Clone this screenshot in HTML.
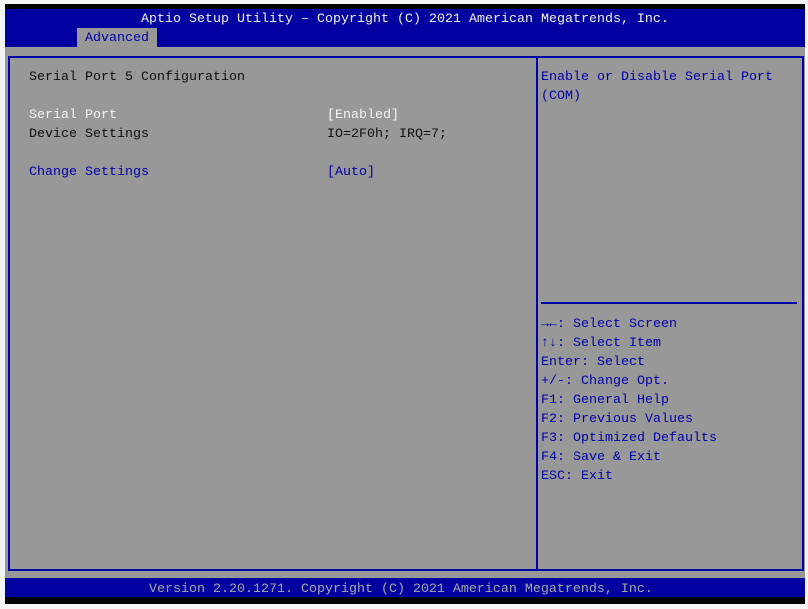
<!DOCTYPE html>
<html><head><style>
body{margin:0;width:808px;height:609px;background:#f3f4f6;position:relative;overflow:hidden;font-family:"Liberation Mono",monospace;font-size:13.33px;}
.a{position:absolute;}
.t{position:absolute;line-height:19px;white-space:pre;}
.w{color:#f4f4f4}.k{color:#101010}.b{color:#0000a8}
</style></head><body>
<div class="a" style="left:5px;top:4px;width:800px;height:5px;background:#000"></div>
<div class="a" style="left:5px;top:9px;width:800px;height:38px;background:#0000a0"></div>
<div class="a" style="left:77px;top:28px;width:80px;height:19px;background:#989898"></div>
<div class="a" style="left:5px;top:47px;width:800px;height:531px;background:#989898"></div>
<div class="a" style="left:8px;top:56px;width:792px;height:511px;border:2px solid #0000a8"></div>
<div class="a" style="left:536px;top:56px;width:2px;height:513px;background:#0000a8"></div>
<div class="a" style="left:541px;top:302px;width:256px;height:2px;background:#0000a8"></div>
<div class="a" style="left:5px;top:578px;width:800px;height:19px;background:#0000a0"></div>
<div class="a" style="left:5px;top:597px;width:800px;height:7px;background:#000"></div>

<div class="t w" style="left:5px;width:800px;text-align:center;top:10px">Aptio Setup Utility – Copyright (C) 2021 American Megatrends, Inc.</div>
<div class="t b" style="left:85px;top:29px">Advanced</div>

<div class="t k" style="left:29px;top:68px">Serial Port 5 Configuration</div>
<div class="t w" style="left:29px;top:106px">Serial Port</div>
<div class="t w" style="left:327px;top:106px">[Enabled]</div>
<div class="t k" style="left:29px;top:125px">Device Settings</div>
<div class="t k" style="left:327px;top:125px">IO=2F0h; IRQ=7;</div>
<div class="t b" style="left:29px;top:163px">Change Settings</div>
<div class="t b" style="left:327px;top:163px">[Auto]</div>

<div class="t b" style="left:541px;top:68px">Enable or Disable Serial Port
(COM)</div>
<div class="t b" style="left:541px;top:315px"><b>→←</b>: Select Screen
<b>↑↓</b>: Select Item
Enter: Select
+/-: Change Opt.
F1: General Help
F2: Previous Values
F3: Optimized Defaults
F4: Save &amp; Exit
ESC: Exit</div>

<div class="t" style="color:#a8a8a8;left:149px;top:580px">Version 2.20.1271. Copyright (C) 2021 American Megatrends, Inc.</div>
</body></html>
